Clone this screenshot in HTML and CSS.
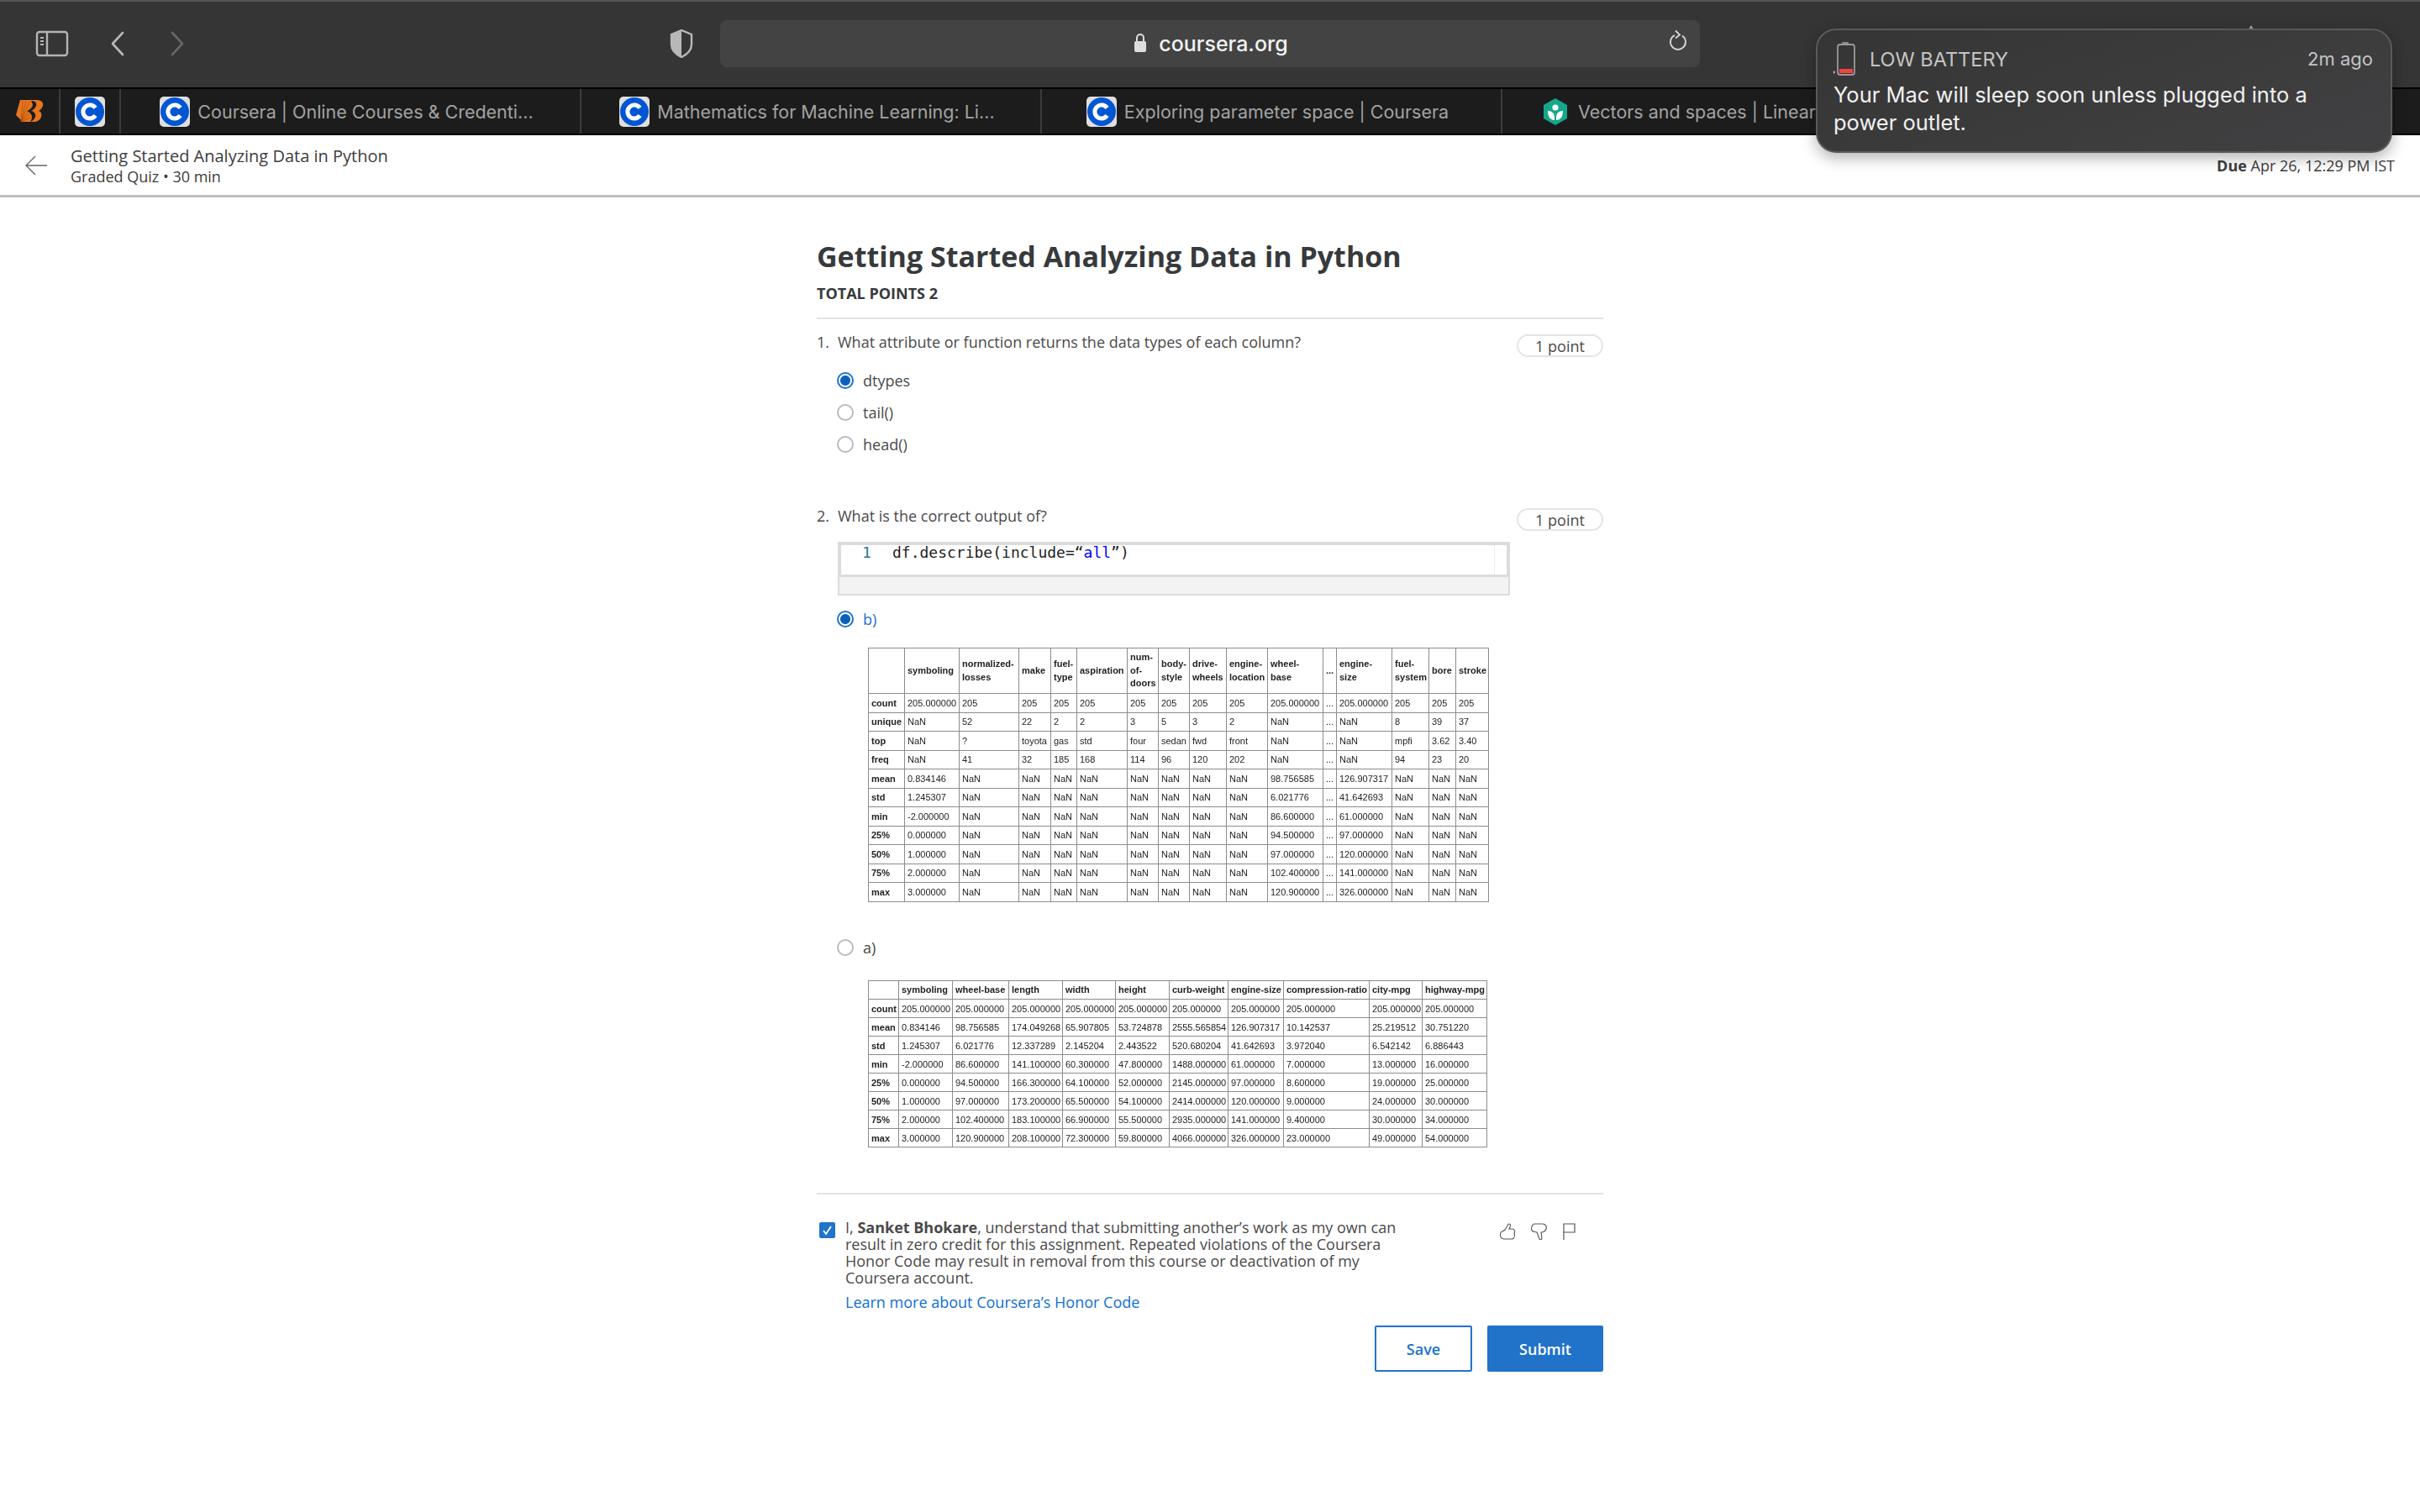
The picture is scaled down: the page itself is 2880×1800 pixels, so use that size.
FILE: index.html
```html
<!DOCTYPE html>
<html lang="en">
<head>
  <meta charset="UTF-8" />
  <title>Getting Started Analyzing Data in Python | Coursera</title>
  <link rel="stylesheet" href="styles.css">
</head>
<body>

  <svg class="defs" width="0" height="0">
    <symbol id="fav-c" viewBox="0 0 36 36">
      <rect x="0" y="0" width="36" height="36" rx="5" fill="#dfdfdf"/>
      <circle cx="18" cy="18" r="17" fill="#0056d2"/>
      <path d="M24.5 13.5a8 8 0 1 0 0 9" fill="none" stroke="#fff" stroke-width="5"/>
    </symbol>
  </svg>

  <div class="toolbar">
    <svg class="tool sidebar-icon" width="40" height="32" viewBox="0 0 40 32">
      <rect x="2" y="2" width="36" height="28" rx="3" fill="none" stroke="#b5b5b5" stroke-width="2.4"/>
      <path d="M14 2v28" stroke="#b5b5b5" stroke-width="2.4"/>
      <path d="M6 9h4M6 13h4M6 17h4" stroke="#b5b5b5" stroke-width="2"/>
    </svg>
    <svg class="tool back-icon" width="18" height="30" viewBox="0 0 18 30">
      <path d="M15 2L3 15l12 13" fill="none" stroke="#b8b8b8" stroke-width="2.6" stroke-linecap="round" stroke-linejoin="round"/>
    </svg>
    <svg class="tool forward-icon" width="18" height="30" viewBox="0 0 18 30">
      <path d="M3 2l12 13L3 28" fill="none" stroke="#666" stroke-width="2.6" stroke-linecap="round" stroke-linejoin="round"/>
    </svg>
    <svg class="tool shield-icon" width="28" height="34" viewBox="0 0 28 34">
      <path d="M14 1l12 5v12c0 7-6 12-12 15C8 30 2 25 2 18V6z" fill="none" stroke="#b8b8b8" stroke-width="2.4"/>
      <path d="M14 1L2 6v12c0 7 6 12 12 15z" fill="#b8b8b8"/>
    </svg>
    <div class="urlbar">
      <svg class="lock" width="16" height="24" viewBox="0 0 16 24">
        <path d="M4 11V6a4 4 0 0 1 8 0v5" fill="none" stroke="#ddd" stroke-width="2"/>
        <rect x="1" y="10" width="14" height="13" rx="2" fill="#ddd"/>
      </svg>
      <span class="domain">coursera.org</span>
      <svg class="reload" width="24" height="28" viewBox="0 0 24 28">
        <path d="M17 7.500a9 9 0 1 1-9-.6" fill="none" stroke="#d8d8d8" stroke-width="1.8"/>
        <path d="M9 1.500l5 5-5 4" fill="none" stroke="#d8d8d8" stroke-width="1.8"/>
      </svg>
    </div>
    <span class="share-tip"></span>
  </div>

  <div class="tabbar">
    <div class="tab pinned">
      <svg width="33" height="27" viewBox="0 0 33 27">
        <path d="M5 0h20c6 0 8 4 7 7-1 3-3 5-5 6 3 1 4 4 3 7-1 4-5 6-9 6H8L0 18z" fill="#e8761f"/>
        <path d="M6 26L8 1M6 26L12 1M6 26L16 2M6 26L20 6M6 26L21 13M6 26L22 19" stroke="#a9500f" stroke-width="0.8"/>
        <path d="M18 1c5 0 7 3 6 6-1 2-3 5-6 6 4 1 6 4 5 7-1 3-3 5-6 6 2-3 3-6 1-9-1-2-3-3-5-4 3-1 6-3 7-6 0-2-1-4-2-6z" fill="#1c1c1c"/>
      </svg>
    </div>
    <div class="tab pinned"><svg class="favicon"><use href="#fav-c"/></svg></div>
    <div class="tab"><svg class="favicon"><use href="#fav-c"/></svg><span>Coursera | Online Courses &amp; Credenti...</span></div>
    <div class="tab"><svg class="favicon"><use href="#fav-c"/></svg><span>Mathematics for Machine Learning: Li...</span></div>
    <div class="tab"><svg class="favicon"><use href="#fav-c"/></svg><span>Exploring parameter space | Coursera</span></div>
    <div class="tab last">
      <svg class="favicon" viewBox="0 0 36 36">
        <path d="M18 2l14 8v16l-14 8-14-8V10z" fill="#14a88a"/>
        <circle cx="18" cy="13" r="3.6" fill="#fff"/>
        <path d="M9 17c5 0 8 3 8 8v3c-5 0-8-4-8-11z" fill="#fff"/>
        <path d="M27 17c-5 0-8 3-8 8v3c5 0 8-4 8-11z" fill="#fff"/>
      </svg>
      <span>Vectors and spaces | Linear algebra</span>
    </div>
  </div>

  <header class="quiz-header">
    <svg class="arrow-back" width="26" height="24" viewBox="0 0 26 24">
      <path d="M12 1L1 12l11 11M1 12h25" fill="none" stroke="#666" stroke-width="1.4"/>
    </svg>
    <div class="quiz-name">
      <div class="quiz-title">Getting Started Analyzing Data in Python</div>
      <div class="quiz-sub">Graded Quiz • 30 min</div>
    </div>
    <div class="due"><b>Due</b> Apr 26, 12:29 PM IST</div>
  </header>

  <div class="notification">
    <div class="notif-head">
      <svg class="battery" width="26" height="40" viewBox="0 0 26 40">
        <rect x="10" y="0" width="8" height="4" rx="1" fill="#8a8a8a"/>
        <rect x="5" y="3" width="20" height="36" rx="3" fill="none" stroke="#9a9a9a" stroke-width="1.8"/>
        <rect x="7" y="32" width="16" height="5" fill="#f2423c"/>
        <path d="M0 34l2 2-2 2z" fill="#ddd"/>
      </svg>
      <span class="notif-app">LOW BATTERY</span>
      <span class="notif-time">2m ago</span>
    </div>
    <div class="notif-body">Your Mac will sleep soon unless plugged into a power outlet.</div>
  </div>

  <main class="quiz">
    <h1>Getting Started Analyzing Data in Python</h1>
    <div class="total">TOTAL POINTS 2</div>

    <section class="question">
      <div class="q-row">
        <div class="q-text"><span class="q-num">1.</span>What attribute or function returns the data types of each column?</div>
        <div class="pill">1 point</div>
      </div>
      <div class="option"><span class="radio on"></span>dtypes</div>
      <div class="option"><span class="radio"></span>tail()</div>
      <div class="option"><span class="radio"></span>head()</div>
    </section>

    <section class="question second">
      <div class="q-row">
        <div class="q-text"><span class="q-num">2.</span>What is the correct output of?</div>
        <div class="pill">1 point</div>
      </div>
      <div class="code">
        <div class="code-editor"><span class="line-no">1</span><span>df.describe(include=“<span class="str">all</span>”)</span></div>
        <div class="code-foot"></div>
      </div>
      <div class="option picked"><span class="radio on"></span>b)</div>
      <table class="df df-wide">
        <colgroup><col><col><col><col><col><col><col><col><col><col><col><col><col><col><col><col></colgroup>
        <thead>
          <tr><th></th><th>symboling</th><th>normalized-<br>losses</th><th>make</th><th>fuel-<br>type</th><th>aspiration</th><th>num-<br>of-<br>doors</th><th>body-<br>style</th><th>drive-<br>wheels</th><th>engine-<br>location</th><th>wheel-<br>base</th><th>...</th><th>engine-<br>size</th><th>fuel-<br>system</th><th>bore</th><th>stroke</th></tr>
        </thead>
        <tbody>
          <tr><th>count</th><td>205.000000</td><td>205</td><td>205</td><td>205</td><td>205</td><td>205</td><td>205</td><td>205</td><td>205</td><td>205.000000</td><td>...</td><td>205.000000</td><td>205</td><td>205</td><td>205</td></tr>
          <tr><th>unique</th><td>NaN</td><td>52</td><td>22</td><td>2</td><td>2</td><td>3</td><td>5</td><td>3</td><td>2</td><td>NaN</td><td>...</td><td>NaN</td><td>8</td><td>39</td><td>37</td></tr>
          <tr><th>top</th><td>NaN</td><td>?</td><td>toyota</td><td>gas</td><td>std</td><td>four</td><td>sedan</td><td>fwd</td><td>front</td><td>NaN</td><td>...</td><td>NaN</td><td>mpfi</td><td>3.62</td><td>3.40</td></tr>
          <tr><th>freq</th><td>NaN</td><td>41</td><td>32</td><td>185</td><td>168</td><td>114</td><td>96</td><td>120</td><td>202</td><td>NaN</td><td>...</td><td>NaN</td><td>94</td><td>23</td><td>20</td></tr>
          <tr><th>mean</th><td>0.834146</td><td>NaN</td><td>NaN</td><td>NaN</td><td>NaN</td><td>NaN</td><td>NaN</td><td>NaN</td><td>NaN</td><td>98.756585</td><td>...</td><td>126.907317</td><td>NaN</td><td>NaN</td><td>NaN</td></tr>
          <tr><th>std</th><td>1.245307</td><td>NaN</td><td>NaN</td><td>NaN</td><td>NaN</td><td>NaN</td><td>NaN</td><td>NaN</td><td>NaN</td><td>6.021776</td><td>...</td><td>41.642693</td><td>NaN</td><td>NaN</td><td>NaN</td></tr>
          <tr><th>min</th><td>-2.000000</td><td>NaN</td><td>NaN</td><td>NaN</td><td>NaN</td><td>NaN</td><td>NaN</td><td>NaN</td><td>NaN</td><td>86.600000</td><td>...</td><td>61.000000</td><td>NaN</td><td>NaN</td><td>NaN</td></tr>
          <tr><th>25%</th><td>0.000000</td><td>NaN</td><td>NaN</td><td>NaN</td><td>NaN</td><td>NaN</td><td>NaN</td><td>NaN</td><td>NaN</td><td>94.500000</td><td>...</td><td>97.000000</td><td>NaN</td><td>NaN</td><td>NaN</td></tr>
          <tr><th>50%</th><td>1.000000</td><td>NaN</td><td>NaN</td><td>NaN</td><td>NaN</td><td>NaN</td><td>NaN</td><td>NaN</td><td>NaN</td><td>97.000000</td><td>...</td><td>120.000000</td><td>NaN</td><td>NaN</td><td>NaN</td></tr>
          <tr><th>75%</th><td>2.000000</td><td>NaN</td><td>NaN</td><td>NaN</td><td>NaN</td><td>NaN</td><td>NaN</td><td>NaN</td><td>NaN</td><td>102.400000</td><td>...</td><td>141.000000</td><td>NaN</td><td>NaN</td><td>NaN</td></tr>
          <tr><th>max</th><td>3.000000</td><td>NaN</td><td>NaN</td><td>NaN</td><td>NaN</td><td>NaN</td><td>NaN</td><td>NaN</td><td>NaN</td><td>120.900000</td><td>...</td><td>326.000000</td><td>NaN</td><td>NaN</td><td>NaN</td></tr>
        </tbody>
      </table>

      <div class="option second-option"><span class="radio"></span>a)</div>
      <table class="df df-narrow">
        <colgroup><col><col><col><col><col><col><col><col><col><col><col></colgroup>
        <thead>
          <tr><th></th><th>symboling</th><th>wheel-base</th><th>length</th><th>width</th><th>height</th><th>curb-weight</th><th>engine-size</th><th>compression-ratio</th><th>city-mpg</th><th>highway-mpg</th></tr>
        </thead>
        <tbody>
          <tr><th>count</th><td>205.000000</td><td>205.000000</td><td>205.000000</td><td>205.000000</td><td>205.000000</td><td>205.000000</td><td>205.000000</td><td>205.000000</td><td>205.000000</td><td>205.000000</td></tr>
          <tr><th>mean</th><td>0.834146</td><td>98.756585</td><td>174.049268</td><td>65.907805</td><td>53.724878</td><td>2555.565854</td><td>126.907317</td><td>10.142537</td><td>25.219512</td><td>30.751220</td></tr>
          <tr><th>std</th><td>1.245307</td><td>6.021776</td><td>12.337289</td><td>2.145204</td><td>2.443522</td><td>520.680204</td><td>41.642693</td><td>3.972040</td><td>6.542142</td><td>6.886443</td></tr>
          <tr><th>min</th><td>-2.000000</td><td>86.600000</td><td>141.100000</td><td>60.300000</td><td>47.800000</td><td>1488.000000</td><td>61.000000</td><td>7.000000</td><td>13.000000</td><td>16.000000</td></tr>
          <tr><th>25%</th><td>0.000000</td><td>94.500000</td><td>166.300000</td><td>64.100000</td><td>52.000000</td><td>2145.000000</td><td>97.000000</td><td>8.600000</td><td>19.000000</td><td>25.000000</td></tr>
          <tr><th>50%</th><td>1.000000</td><td>97.000000</td><td>173.200000</td><td>65.500000</td><td>54.100000</td><td>2414.000000</td><td>120.000000</td><td>9.000000</td><td>24.000000</td><td>30.000000</td></tr>
          <tr><th>75%</th><td>2.000000</td><td>102.400000</td><td>183.100000</td><td>66.900000</td><td>55.500000</td><td>2935.000000</td><td>141.000000</td><td>9.400000</td><td>30.000000</td><td>34.000000</td></tr>
          <tr><th>max</th><td>3.000000</td><td>120.900000</td><td>208.100000</td><td>72.300000</td><td>59.800000</td><td>4066.000000</td><td>326.000000</td><td>23.000000</td><td>49.000000</td><td>54.000000</td></tr>
        </tbody>
      </table>
    </section>

    <section class="honor">
      <span class="checkbox">
        <svg width="19" height="19" viewBox="0 0 19 19"><path d="M5 10l3 4 6-9" fill="none" stroke="#fff" stroke-width="1.8"/></svg>
      </span>
      <div class="honor-text">
        <p>I, <b>Sanket Bhokare</b>, understand that submitting another’s work as my own can result in zero credit for this assignment. Repeated violations of the Coursera Honor Code may result in removal from this course or deactivation of my Coursera account.</p>
        <a href="#">Learn more about Coursera’s Honor Code</a>
      </div>
      <div class="feedback">
        <svg width="19" height="20" viewBox="0 0 19 20"><path d="M6 8l4-6.500c1-1 3 0 2.500 2L11 7h4c3 0 3 4 2 5 1 3 0 6-2 7H5C1 19 0 16 .7 12 1 10 4 10 6 8z" fill="none" stroke="#555" stroke-width="1.1"/></svg>
        <svg width="20" height="20" viewBox="0 0 20 20"><path d="M4 1h10c3 0 5 3 4 6-1 3-4 4-6 4l1 7c0 2-2 2-3 1L7 11C5 10 3 11 1 9 0 6 1 2 4 1z" fill="none" stroke="#555" stroke-width="1.1"/></svg>
        <svg width="15" height="20" viewBox="0 0 15 20"><path d="M1 20V1h13v10H1" fill="none" stroke="#555" stroke-width="1.2"/></svg>
      </div>
    </section>

    <div class="actions">
      <button class="btn save">Save</button>
      <button class="btn submit">Submit</button>
    </div>
  </main>

</body>
</html>
```

FILE: styles.css
```css
* {
  box-sizing: border-box;
}

html, body {
  margin: 0;
  padding: 0;
  background: #fff;
}

body {
  position: relative;
  height: 1800px;
  overflow: hidden;
  font-family: "Open Sans", Arial, sans-serif;
  color: #373a3c;
}

.defs {
  position: absolute;
}

/* browser chrome */
.toolbar {
  position: relative;
  display: flex;
  align-items: center;
  height: 104px;
  padding: 0 0 0 42px;
  background: #353535;
  border-top: 2px solid #555;
}

.toolbar svg {
  margin-top: -2px;
}

.sidebar-icon {
  margin-right: 49px;
}

.back-icon {
  margin-right: 53px;
}

.forward-icon {
  margin-right: 577px;
}

.shield-icon {
  margin-right: 32px;
}

.urlbar {
  position: relative;
  display: flex;
  align-items: center;
  justify-content: center;
  gap: 14px;
  width: 1166px;
  height: 56px;
  margin-top: -2px;
  padding-left: 2px;
  background: #434343;
  border-radius: 8px;
  font-family: Inter, Roboto, Arial, sans-serif;
}

.domain {
  color: #f2f2f2;
  font-size: 25px;
  font-weight: 500;
}

.reload {
  position: absolute;
  right: 14px;
  top: 13px;
}

.share-tip {
  position: absolute;
  left: 2674px;
  top: 28px;
  border: 5px solid transparent;
  border-top: 0;
  border-bottom: 8px solid #aaa;
}

.tabbar {
  display: flex;
  height: 57px;
  background: #1c1c1c;
  border-top: 2px solid #000;
  border-bottom: 2px solid #000;
  font-family: Inter, Roboto, Arial, sans-serif;
  font-size: 21.5px;
  color: #a3a3a3;
  white-space: nowrap;
  overflow: hidden;
}

.tab {
  display: flex;
  flex: none;
  align-items: center;
  justify-content: center;
  gap: 9px;
  width: 548px;
  padding-right: 9px;
  border-right: 2px solid #3c3c3c;
}

.tab.pinned {
  width: 72px;
  padding-right: 0;
}

.tab.last {
  border-right: 0;
  justify-content: flex-start;
  padding-left: 45px;
}

.favicon {
  width: 36px;
  height: 36px;
}

/* course header */
.quiz-header {
  display: flex;
  align-items: center;
  height: 74px;
  padding: 0 30px;
  border-bottom: 3px solid #bdbdbd;
}

.arrow-back {
  margin-right: 28px;
}

.quiz-name {
  flex: 1;
  color: #3d3d3d;
}

.quiz-title {
  font-size: 20px;
  line-height: 26px;
}

.quiz-sub {
  font-size: 18px;
  line-height: 22px;
}

.due {
  font-size: 18px;
  color: #3d3d3d;
}

/* notification on top of the chrome */
.notification {
  position: absolute;
  left: 2161px;
  top: 34px;
  width: 686px;
  height: 148px;
  padding: 14px 21px 0 19px;
  background: linear-gradient(160deg, #363535, #414143);
  border: 2px solid #5a5a5a;
  border-radius: 24px;
  box-shadow: 0 6px 18px rgba(0, 0, 0, 0.3);
  font-family: Inter, Roboto, Arial, sans-serif;
}

.notif-head {
  display: flex;
  align-items: center;
  color: #c4c4c4;
  height: 40px;
}

.battery {
  margin-right: 17px;
}

.notif-app {
  flex: 1;
  font-size: 23.5px;
}

.notif-time {
  font-size: 22px;
}

.notif-body {
  margin-top: 6px;
  color: #f1f1f1;
  font-size: 25.5px;
  line-height: 33px;
}

/* quiz */
.quiz {
  width: 936px;
  margin: 0 auto;
}

h1 {
  margin: 47px 0 0;
  font-size: 34px;
  line-height: 46px;
  font-weight: 700;
  color: #373a3c;
}

.total {
  margin-top: 11px;
  padding-bottom: 19px;
  border-bottom: 2px solid #e2e2e2;
  font-size: 18px;
  line-height: 20px;
  font-weight: 700;
}

.question {
  padding-top: 18px;
}

.question.second {
  padding-top: 57px;
}

.q-row {
  display: flex;
  justify-content: space-between;
  align-items: flex-start;
  height: 36px;
}

.q-text {
  font-size: 18px;
  line-height: 24px;
  margin-top: -3px;
  color: #4a4a4a;
}

.q-num {
  display: inline-block;
  width: 25px;
}

.pill {
  width: 103px;
  height: 27px;
  border: 2px solid #e4e4e4;
  border-radius: 14px;
  font-size: 18px;
  line-height: 24px;
  text-align: center;
  color: #4a4a4a;
}

.option {
  display: flex;
  align-items: center;
  gap: 11px;
  height: 38px;
  padding-left: 24px;
  font-size: 18px;
  color: #4a4a4a;
}

.option.picked {
  margin-top: 9px;
  color: #2072c8;
}

.option.second-option {
  margin-top: 35px;
}

.radio {
  display: block;
  width: 20px;
  height: 20px;
  border: 2px solid #bbb;
  border-radius: 50%;
  background: #fff;
}

.radio.on {
  border-color: #1f74cc;
  background: radial-gradient(circle, #0c60bd 0 5.5px, #fff 6.5px);
}

.code {
  width: 800px;
  margin-left: 25px;
  margin-top: 4px;
  border: 2px solid #dcdcdc;
}

.code-editor {
  display: flex;
  height: 40px;
  padding-left: 25px;
  border: 2px solid #dcdcdc;
  border-bottom-width: 3px;
  background: linear-gradient(to left, #fff 14px, #eee 14px, #eee 15px, #fff 15px);
  font-family: "DejaVu Sans Mono", "Liberation Mono", monospace;
  font-size: 18px;
  line-height: 17px;
  color: #222;
}

.line-no {
  width: 36px;
  color: #237893;
}

.str {
  color: #0000ff;
}

.code-foot {
  height: 20px;
  background: #f3f3f3;
}

/* pandas tables */
.df {
  margin-left: 61px;
  border-collapse: collapse;
  table-layout: fixed;
  font-family: "Liberation Sans", Arial, sans-serif;
  font-size: 11px;
  color: #222;
  filter: blur(0.3px);
}

.df th, .df td {
  padding: 0 0 0 3px;
  border: 1px solid #8c8c8c;
  text-align: left;
  white-space: nowrap;
  overflow: hidden;
}

.df th {
  font-weight: 700;
}

.df tbody tr {
  height: 22.5px;
}

.df-wide {
  width: 738px;
  margin-top: 15px;
}

.df-wide thead tr {
  height: 54px;
}

.df-wide thead th {
  line-height: 15.7px;
}

.df-wide col:nth-child(1) { width: 43px; }
.df-wide col:nth-child(2) { width: 65px; }
.df-wide col:nth-child(3) { width: 71px; }
.df-wide col:nth-child(4) { width: 38px; }
.df-wide col:nth-child(5) { width: 31px; }
.df-wide col:nth-child(6) { width: 60px; }
.df-wide col:nth-child(7) { width: 37px; }
.df-wide col:nth-child(8) { width: 37px; }
.df-wide col:nth-child(9) { width: 44px; }
.df-wide col:nth-child(10) { width: 49px; }
.df-wide col:nth-child(11) { width: 66px; }
.df-wide col:nth-child(12) { width: 16px; }
.df-wide col:nth-child(13) { width: 66px; }
.df-wide col:nth-child(14) { width: 44px; }
.df-wide col:nth-child(15) { width: 32px; }
.df-wide col:nth-child(16) { width: 39px; }

.df-narrow {
  width: 736px;
  margin-top: 20px;
}

.df-narrow thead tr {
  height: 22.5px;
}

.df-narrow tbody tr {
  height: 22px;
}

.df-narrow col:nth-child(1) { width: 36px; }
.df-narrow col:nth-child(2) { width: 64px; }
.df-narrow col:nth-child(3) { width: 67px; }
.df-narrow col:nth-child(4) { width: 64px; }
.df-narrow col:nth-child(5) { width: 63px; }
.df-narrow col:nth-child(6) { width: 64px; }
.df-narrow col:nth-child(7) { width: 70px; }
.df-narrow col:nth-child(8) { width: 66px; }
.df-narrow col:nth-child(9) { width: 102px; }
.df-narrow col:nth-child(10) { width: 63px; }
.df-narrow col:nth-child(11) { width: 77px; }

/* honor code */
.honor {
  position: relative;
  display: flex;
  margin-top: 54px;
  padding-top: 29px;
  border-top: 2px solid #e2e2e2;
}

.checkbox {
  flex: none;
  width: 19px;
  height: 19px;
  margin: 4px 12px 0 3px;
  border-radius: 2px;
  background: #1f74cc;
}

.checkbox svg {
  display: block;
}

.honor-text {
  width: 670px;
  font-size: 18px;
  line-height: 20px;
  color: #4a4a4a;
}

.honor-text p {
  margin: 0 0 9px;
}

.honor-text a {
  color: #0f6fd2;
  text-decoration: none;
}

.feedback {
  display: flex;
  gap: 18px;
  margin-left: 109px;
  padding-top: 5px;
  align-items: flex-start;
}

.actions {
  display: flex;
  justify-content: flex-end;
  gap: 18px;
  margin-top: 18px;
}

.btn {
  height: 55px;
  font-family: "Open Sans", Arial, sans-serif;
  font-size: 18px;
  font-weight: 600;
  border-radius: 2px;
  border: 2px solid #2073c9;
}

.save {
  width: 116px;
  background: #fff;
  color: #2073c9;
}

.submit {
  width: 138px;
  background: #2073c9;
  color: #fff;
}
```
